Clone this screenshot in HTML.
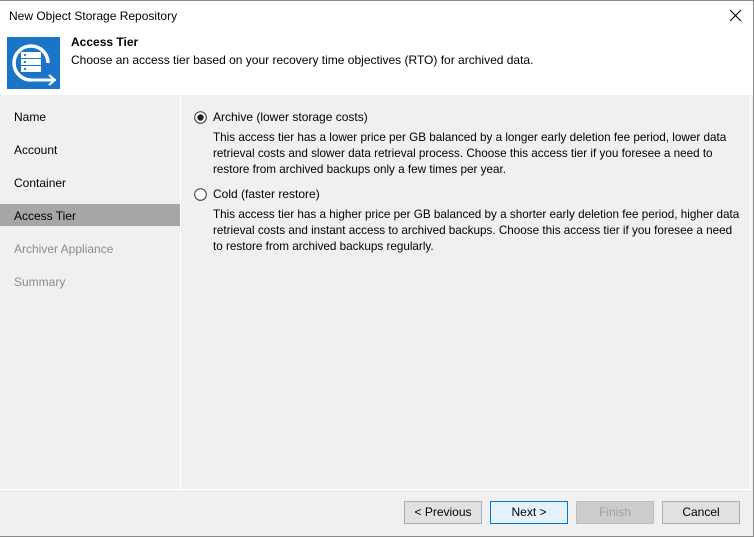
<!DOCTYPE html>
<html><head><style>
*{margin:0;padding:0;box-sizing:border-box}
body{width:754px;height:537px;overflow:hidden;background:#f0f0f0;font-family:"Liberation Sans",sans-serif;font-size:12px;color:#000;position:relative}
.win{position:absolute;left:0;top:0;width:754px;height:537px;border:1px solid #888;border-left:none}
.abs{position:absolute;white-space:nowrap}
.nav{position:absolute;left:14px;font-size:12px}
.desc{position:absolute;left:213px;font-size:11.7px;line-height:16px;white-space:nowrap}
.btn{position:absolute;top:501px;width:78px;height:23px;border:1px solid #adadad;background:#e1e1e1;text-align:center;line-height:21px;font-size:12px}
</style></head><body>
<div class="abs" style="left:0;top:0;width:754px;height:95px;background:#fff"></div>
<div class="abs" style="left:9px;top:9px;font-size:12px">New Object Storage Repository</div>
<svg class="abs" style="left:729px;top:9px" width="13" height="13"><path d="M1 1L12 12M12 1L1 12" stroke="#000" stroke-width="1.1"/></svg>
<svg class="abs" style="left:7px;top:37px" width="53" height="52">
<rect width="53" height="52" fill="#1a74c8"/>
<path d="M24 43 A17 17 0 1 1 41 26" fill="none" stroke="#fff" stroke-width="3.5"/>
<path d="M24 43 L46 43" stroke="#fff" stroke-width="3"/>
<path d="M42 38 L48 43 L42 48" fill="none" stroke="#fff" stroke-width="2"/>
<rect x="14" y="15" width="20" height="6" fill="#fff"/><rect x="14" y="22" width="20" height="6" fill="#fff"/><rect x="14" y="29" width="20" height="6" fill="#fff"/>
<circle cx="18" cy="18" r="1.1" fill="#1a74c8"/><circle cx="18" cy="25" r="1.1" fill="#1a74c8"/><circle cx="18" cy="32" r="1.1" fill="#1a74c8"/>
</svg>
<div class="abs" style="left:71px;top:35px;font-weight:bold;font-size:12px">Access Tier</div>
<div class="abs" style="left:71px;top:53px;font-size:12px">Choose an access tier based on your recovery time objectives (RTO) for archived data.</div>
<div class="abs" style="left:180px;top:95px;width:1px;height:394px;background:#fff"></div>
<div class="abs" style="left:0;top:204px;width:180px;height:22px;background:#a6a6a6"></div>
<div class="nav" style="top:110px">Name</div>
<div class="nav" style="top:143px">Account</div>
<div class="nav" style="top:176px">Container</div>
<div class="nav" style="top:209px">Access Tier</div>
<div class="nav" style="top:242px;color:#8c8c8c">Archiver Appliance</div>
<div class="nav" style="top:275px;color:#8c8c8c">Summary</div>
<svg class="abs" style="left:194px;top:111px" width="13" height="13"><circle cx="6.5" cy="6.5" r="5.8" fill="#fff" stroke="#333"/><circle cx="6.5" cy="6.5" r="3.2" fill="#222"/></svg>
<div class="abs" style="left:213px;top:110px">Archive (lower storage costs)</div>
<div class="desc" style="top:130px">This access tier has a lower price per GB balanced by a longer early deletion fee period, lower data<br>retrieval costs and slower data retrieval process. Choose this access tier if you foresee a need to<br>restore from archived backups only a few times per year.</div>
<svg class="abs" style="left:194px;top:188px" width="13" height="13"><circle cx="6.5" cy="6.5" r="5.8" fill="#fff" stroke="#333"/></svg>
<div class="abs" style="left:213px;top:187px">Cold (faster restore)</div>
<div class="desc" style="top:207px">This access tier has a higher price per GB balanced by a shorter early deletion fee period, higher data<br>retrieval costs and instant access to archived backups. Choose this access tier if you foresee a need<br>to restore from archived backups regularly.</div>
<div class="abs" style="left:0;top:489px;width:750px;height:1px;background:#fff"></div>
<div class="abs" style="left:750px;top:95px;width:1px;height:395px;background:#fff"></div>
<div class="btn" style="left:404px">&lt; Previous</div>
<div class="btn" style="left:490px;border-color:#0078d7;background:#e5f1fb">Next &gt;</div>
<div class="btn" style="left:576px;background:#cccccc;border-color:#bfbfbf;color:#a0a0a0">Finish</div>
<div class="btn" style="left:662px">Cancel</div>
<div class="win"></div>
</body></html>
